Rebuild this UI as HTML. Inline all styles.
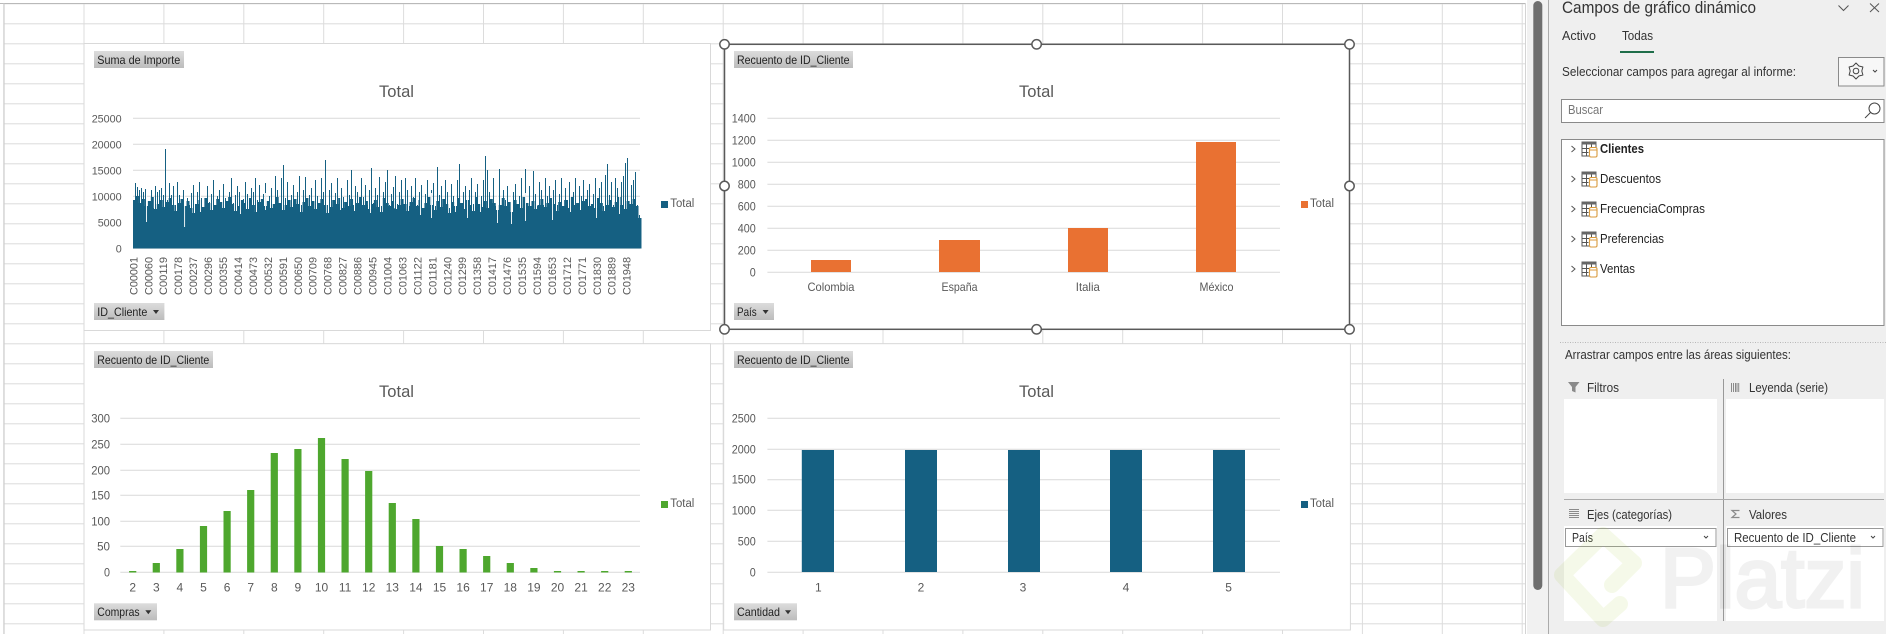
<!DOCTYPE html>
<html lang="es">
<head>
<meta charset="utf-8">
<title>Gráficos dinámicos</title>
<style>
html,body{margin:0;padding:0;width:1886px;height:634px;overflow:hidden;background:#fff}
svg{display:block}
text{font-family:"Liberation Sans",sans-serif}
.ax{font-size:12px;fill:#595959}
#c1 .ax{font-size:10.8px}
.ti{font-size:17px;fill:#595959}
.pv{font-size:12px;fill:#222}
.le{font-size:11.5px;fill:#595959}
.pn{font-size:12.5px;fill:#333}
.li{font-size:12.5px;fill:#222}
</style>
</head>
<body>
<svg width="1886" height="634" viewBox="0 0 1886 634" xmlns="http://www.w3.org/2000/svg">
<defs>
<pattern id="grid" patternUnits="userSpaceOnUse" x="83.5" y="3.3" width="79.9" height="20">
<rect x="0" y="0" width="1" height="20" fill="#dcdcdc"/>
<rect x="0" y="0" width="79.9" height="1" fill="#dcdcdc"/>
</pattern>
<pattern id="stripes" patternUnits="userSpaceOnUse" x="133" y="0" width="2" height="10">
<rect x="0" y="0" width="1" height="10" fill="#156082"/>
</pattern>
<linearGradient id="btn" x1="0" y1="0" x2="0" y2="1">
<stop offset="0" stop-color="#dcdcdc"/><stop offset="1" stop-color="#bcbcbc"/>
</linearGradient>
<g id="tbl">
<rect x="0.5" y="0.5" width="14" height="14" fill="#fff" stroke="#555" stroke-width="1"/>
<rect x="0" y="0" width="15" height="3" fill="#666"/>
<path d="M0 7H9M0 11H7M5 3V15M10 3V6" stroke="#555" stroke-width="1" fill="none"/>
<rect x="8" y="6" width="7.5" height="9.5" rx="1.5" fill="#fff" stroke="#d99a3c" stroke-width="1.1"/>
<path d="M8 8.5H15.5" stroke="#d99a3c" stroke-width="1"/>
</g>
</defs>

<!-- sheet -->
<rect width="1886" height="634" fill="#fff"/>
<rect x="4" y="3" width="1522" height="631" fill="url(#grid)"/>
<rect x="0" y="3" width="1526" height="1" fill="#b9b9b9"/>
<rect x="3.4" y="3" width="1" height="631" fill="#c6c6c6"/>
<rect x="1525" y="3" width="1" height="631" fill="#d4d4d4"/>

<!-- scrollbar -->
<rect x="1527" y="0" width="21" height="634" fill="#f1f1f1"/>
<rect x="1533.3" y="1" width="9" height="589" rx="4.5" fill="#6e6e6e"/>
<rect x="1548" y="0" width="1" height="634" fill="#ababab"/>

<!-- chart 1 -->
<g id="c1">
<rect x="84" y="43.5" width="626.5" height="287" fill="#fff" stroke="#d9d9d9"/>
<rect x="94" y="51" width="90" height="17" fill="url(#btn)"/>
<text class="pv" x="97.3" y="64" textLength="83" lengthAdjust="spacingAndGlyphs">Suma de Importe</text>
<text class="ti" x="379" y="97" textLength="35" lengthAdjust="spacingAndGlyphs">Total</text>
<g stroke="#d9d9d9" stroke-width="1">
<path d="M133 118.3H640M133 144.3H640M133 170.3H640M133 196.3H640M133 222.3H640M133 248.3H640"/>
</g>
<g text-anchor="end">
<text class="ax" x="121.7" y="122.3" textLength="30" lengthAdjust="spacingAndGlyphs">25000</text>
<text class="ax" x="121.7" y="148.3" textLength="30" lengthAdjust="spacingAndGlyphs">20000</text>
<text class="ax" x="121.7" y="174.3" textLength="30" lengthAdjust="spacingAndGlyphs">15000</text>
<text class="ax" x="121.7" y="200.3" textLength="30" lengthAdjust="spacingAndGlyphs">10000</text>
<text class="ax" x="121.7" y="226.3" textLength="24" lengthAdjust="spacingAndGlyphs">5000</text>
<text class="ax" x="121.7" y="252.3" textLength="6" lengthAdjust="spacingAndGlyphs">0</text>
</g>
<path fill="url(#stripes)" d="M133 248.5V209h2V183h2V187h2V190h2V188h2V192h2V189h2V222h2V205h2V190h2V208h2V186h2V192h2V190h2V188h2V195h2V149h2V200h2V183h2V195h2V186h2V205h2V182h2V195h2V208h2V190h2V227h2V198h2V205h2V193h2V185h2V204h2V192h2V182h2V198h2V207h2V200h2V186h2V202h2V194h2V180h2V205h2V196h2V190h2V208h2V184h2V198h2V205h2V192h2V178h2V203h2V195h2V186h2V192h2V206h2V199h2V182h2V194h2V205h2V188h2V192h2V178h2V200h2V185h2V207h2V194h2V183h2V205h2V196h2V188h2V204h2V176h2V190h2V205h2V178h2V165h2V198h2V182h2V206h2V195h2V185h2V204h2V192h2V176h2V205h2V190h2V177h2V206h2V195h2V188h2V203h2V180h2V196h2V206h2V178h2V192h2V160h2V205h2V190h2V183h2V204h2V193h2V178h2V205h2V188h2V197h2V206h2V180h2V195h2V170h2V205h2V186h2V192h2V206h2V178h2V197h2V185h2V205h2V190h2V168h2V203h2V188h2V195h2V177h2V206h2V192h2V182h2V170h2V205h2V194h2V187h2V176h2V204h2V192h2V180h2V205h2V178h2V190h2V206h2V186h2V197h2V178h2V205h2V192h2V185h2V208h2V194h2V180h2V205h2V190h2V183h2V206h2V167h2V195h2V186h2V205h2V180h2V192h2V208h2V184h2V196h2V206h2V180h2V164h2V205h2V192h2V186h2V208h2V190h2V178h2V204h2V192h2V184h2V205h2V196h2V180h2V156h2V170h2V192h2V204h2V178h2V206h2V223h2V169h2V208h2V190h2V200h2V186h2V210h2V223h2V192h2V184h2V205h2V196h2V178h2V221h2V169h2V204h2V186h2V208h2V171h2V194h2V206h2V182h2V190h2V205h2V178h2V196h2V186h2V220h2V190h2V180h2V205h2V194h2V178h2V207h2V188h2V200h2V182h2V205h2V192h2V178h2V206h2V186h2V196h2V180h2V205h2V190h2V184h2V208h2V194h2V178h2V203h2V188h2V182h2V206h2V175h2V164h2V195h2V182h2V205h2V178h2V188h2V207h2V182h2V176h2V163h2V158h2V204h2V185h2V180h2V172h2V205h2V215h2V248.5Z"/>
<path fill="#156082" transform="translate(133 0) scale(.9912 1)" d="M0 248.5V200h3V196h3V203h3V199h3V206h3V201h3V197h3V209h3V204h3V200h3V207h3V202h3V198h3V205h3V211h3V203h3V199h3V206h3V201h3V208h3V213h3V204h3V200h3V207h3V198h3V203h3V210h3V205h3V199h3V202h3V208h3V201h3V197h3V204h3V211h3V206h3V200h3V203h3V209h3V198h3V205h3V212h3V202h3V199h3V206h3V201h3V208h3V204h3V197h3V203h3V210h3V205h3V200h3V207h3V199h3V204h3V212h3V202h3V198h3V206h3V201h3V209h3V203h3V199h3V205h3V213h3V207h3V200h3V204h3V198h3V208h3V202h3V206h3V199h3V211h3V203h3V197h3V205h3V201h3V209h3V204h3V200h3V207h3V212h3V198h3V203h3V206h3V201h3V209h3V205h3V199h3V204h3V211h3V202h3V198h3V206h3V200h3V208h3V203h3V197h3V205h3V210h3V201h3V207h3V199h3V204h3V213h3V202h3V206h3V198h3V203h3V209h3V200h3V205h3V211h3V197h3V204h3V207h3V201h3V208h3V199h3V203h3V210h3V205h3V198h3V206h3V202h3V212h3V200h3V204h3V208h3V197h3V203h3V206h3V201h3V209h3V205h3V199h3V207h3V203h3V198h3V204h3V211h3V202h3V206h3V200h3V208h3V197h3V205h3V203h3V210h3V201h3V199h3V206h3V204h3V208h3V198h3V203h3V211h3V205h3V200h3V207h3V202h3V197h3V205h3V209h3V201h3V204h3V199h3V206h3V218h3V248.5Z"/>
<path stroke="#fff" stroke-width=".9" fill="none" d="M146.5 193V222M184.6 193V227M200.5 193V212M240.5 193V214M265.5 193V210M300.5 193V212M340.5 193V210M370.5 193V213M394.5 193V208M420.5 193V215M431.5 193V218M455.5 193V212M467.5 193V218M480.5 193V212M497.5 193V223M511.5 193V224M525.5 193V221M552.5 193V220M570.5 193V212M596.5 193V218M619.5 193V214"/>
<text class="ax" transform="translate(137.3 295) rotate(-90)" textLength="38" lengthAdjust="spacingAndGlyphs">C00001</text>
<text class="ax" transform="translate(152.25 295) rotate(-90)" textLength="38" lengthAdjust="spacingAndGlyphs">C00060</text>
<text class="ax" transform="translate(167.2 295) rotate(-90)" textLength="38" lengthAdjust="spacingAndGlyphs">C00119</text>
<text class="ax" transform="translate(182.15 295) rotate(-90)" textLength="38" lengthAdjust="spacingAndGlyphs">C00178</text>
<text class="ax" transform="translate(197.1 295) rotate(-90)" textLength="38" lengthAdjust="spacingAndGlyphs">C00237</text>
<text class="ax" transform="translate(212.05 295) rotate(-90)" textLength="38" lengthAdjust="spacingAndGlyphs">C00296</text>
<text class="ax" transform="translate(227 295) rotate(-90)" textLength="38" lengthAdjust="spacingAndGlyphs">C00355</text>
<text class="ax" transform="translate(241.95 295) rotate(-90)" textLength="38" lengthAdjust="spacingAndGlyphs">C00414</text>
<text class="ax" transform="translate(256.9 295) rotate(-90)" textLength="38" lengthAdjust="spacingAndGlyphs">C00473</text>
<text class="ax" transform="translate(271.85 295) rotate(-90)" textLength="38" lengthAdjust="spacingAndGlyphs">C00532</text>
<text class="ax" transform="translate(286.8 295) rotate(-90)" textLength="38" lengthAdjust="spacingAndGlyphs">C00591</text>
<text class="ax" transform="translate(301.75 295) rotate(-90)" textLength="38" lengthAdjust="spacingAndGlyphs">C00650</text>
<text class="ax" transform="translate(316.7 295) rotate(-90)" textLength="38" lengthAdjust="spacingAndGlyphs">C00709</text>
<text class="ax" transform="translate(331.65 295) rotate(-90)" textLength="38" lengthAdjust="spacingAndGlyphs">C00768</text>
<text class="ax" transform="translate(346.6 295) rotate(-90)" textLength="38" lengthAdjust="spacingAndGlyphs">C00827</text>
<text class="ax" transform="translate(361.55 295) rotate(-90)" textLength="38" lengthAdjust="spacingAndGlyphs">C00886</text>
<text class="ax" transform="translate(376.5 295) rotate(-90)" textLength="38" lengthAdjust="spacingAndGlyphs">C00945</text>
<text class="ax" transform="translate(391.45 295) rotate(-90)" textLength="38" lengthAdjust="spacingAndGlyphs">C01004</text>
<text class="ax" transform="translate(406.4 295) rotate(-90)" textLength="38" lengthAdjust="spacingAndGlyphs">C01063</text>
<text class="ax" transform="translate(421.35 295) rotate(-90)" textLength="38" lengthAdjust="spacingAndGlyphs">C01122</text>
<text class="ax" transform="translate(436.3 295) rotate(-90)" textLength="38" lengthAdjust="spacingAndGlyphs">C01181</text>
<text class="ax" transform="translate(451.25 295) rotate(-90)" textLength="38" lengthAdjust="spacingAndGlyphs">C01240</text>
<text class="ax" transform="translate(466.2 295) rotate(-90)" textLength="38" lengthAdjust="spacingAndGlyphs">C01299</text>
<text class="ax" transform="translate(481.15 295) rotate(-90)" textLength="38" lengthAdjust="spacingAndGlyphs">C01358</text>
<text class="ax" transform="translate(496.1 295) rotate(-90)" textLength="38" lengthAdjust="spacingAndGlyphs">C01417</text>
<text class="ax" transform="translate(511.05 295) rotate(-90)" textLength="38" lengthAdjust="spacingAndGlyphs">C01476</text>
<text class="ax" transform="translate(526 295) rotate(-90)" textLength="38" lengthAdjust="spacingAndGlyphs">C01535</text>
<text class="ax" transform="translate(540.95 295) rotate(-90)" textLength="38" lengthAdjust="spacingAndGlyphs">C01594</text>
<text class="ax" transform="translate(555.9 295) rotate(-90)" textLength="38" lengthAdjust="spacingAndGlyphs">C01653</text>
<text class="ax" transform="translate(570.85 295) rotate(-90)" textLength="38" lengthAdjust="spacingAndGlyphs">C01712</text>
<text class="ax" transform="translate(585.8 295) rotate(-90)" textLength="38" lengthAdjust="spacingAndGlyphs">C01771</text>
<text class="ax" transform="translate(600.75 295) rotate(-90)" textLength="38" lengthAdjust="spacingAndGlyphs">C01830</text>
<text class="ax" transform="translate(615.7 295) rotate(-90)" textLength="38" lengthAdjust="spacingAndGlyphs">C01889</text>
<text class="ax" transform="translate(630.65 295) rotate(-90)" textLength="38" lengthAdjust="spacingAndGlyphs">C01948</text>
<rect x="661" y="201" width="7" height="7" fill="#156082"/>
<text class="le" x="670.3" y="207" textLength="24" lengthAdjust="spacingAndGlyphs">Total</text>
<rect x="94" y="303" width="70.4" height="17" fill="url(#btn)"/>
<text class="pv" x="97.3" y="316" textLength="50" lengthAdjust="spacingAndGlyphs">ID_Cliente</text>
<path d="M153 310H159L156 314Z" fill="#333"/>
</g>

<!-- chart 2 -->
<rect x="724.5" y="44.3" width="625" height="285" fill="#fff"/>
<rect x="734" y="51" width="119" height="17" fill="url(#btn)"/>
<text class="pv" x="737" y="64" textLength="112.5" lengthAdjust="spacingAndGlyphs">Recuento de ID_Cliente</text>
<text class="ti" x="1019" y="97" textLength="35" lengthAdjust="spacingAndGlyphs">Total</text>
<path stroke="#d9d9d9" d="M767.4 118.3H1280M767.4 140.3H1280M767.4 162.3H1280M767.4 184.3H1280M767.4 206.3H1280M767.4 228.3H1280M767.4 250.3H1280M767.4 272.3H1280"/>
<g text-anchor="end">
<text class="ax" x="755.8" y="122.3" textLength="24" lengthAdjust="spacingAndGlyphs">1400</text>
<text class="ax" x="755.8" y="144.3" textLength="24" lengthAdjust="spacingAndGlyphs">1200</text>
<text class="ax" x="755.8" y="166.3" textLength="24" lengthAdjust="spacingAndGlyphs">1000</text>
<text class="ax" x="755.8" y="188.3" textLength="18" lengthAdjust="spacingAndGlyphs">800</text>
<text class="ax" x="755.8" y="210.3" textLength="18" lengthAdjust="spacingAndGlyphs">600</text>
<text class="ax" x="755.8" y="232.3" textLength="18" lengthAdjust="spacingAndGlyphs">400</text>
<text class="ax" x="755.8" y="254.3" textLength="18" lengthAdjust="spacingAndGlyphs">200</text>
<text class="ax" x="755.8" y="276.3" textLength="6" lengthAdjust="spacingAndGlyphs">0</text>
</g>
<g fill="#e97132">
<rect x="811" y="260" width="40" height="12"/>
<rect x="939" y="240" width="41" height="32"/>
<rect x="1068" y="228" width="40" height="44"/>
<rect x="1196" y="142" width="40" height="130"/>
</g>
<text class="ax" x="807.5" y="291" textLength="47" lengthAdjust="spacingAndGlyphs">Colombia</text>
<text class="ax" x="941.5" y="291" textLength="36" lengthAdjust="spacingAndGlyphs">España</text>
<text class="ax" x="1075.8" y="291" textLength="24" lengthAdjust="spacingAndGlyphs">Italia</text>
<text class="ax" x="1199.5" y="291" textLength="34" lengthAdjust="spacingAndGlyphs">México</text>
<rect x="1301" y="201" width="7" height="7" fill="#e97132"/>
<text class="le" x="1310" y="207" textLength="24" lengthAdjust="spacingAndGlyphs">Total</text>
<rect x="734" y="303" width="40" height="17" fill="url(#btn)"/>
<text class="pv" x="737" y="316" textLength="19.7" lengthAdjust="spacingAndGlyphs">País</text>
<path d="M762.6 310H768.6L765.6 314Z" fill="#333"/>

<!-- chart 3 -->
<rect x="84" y="343.7" width="626.5" height="286.3" fill="#fff" stroke="#d9d9d9"/>
<rect x="94" y="351" width="119" height="17" fill="url(#btn)"/>
<text class="pv" x="97.3" y="364" textLength="112" lengthAdjust="spacingAndGlyphs">Recuento de ID_Cliente</text>
<text class="ti" x="379" y="397" textLength="35" lengthAdjust="spacingAndGlyphs">Total</text>
<path stroke="#d9d9d9" d="M120.3 418.3H640M120.3 444.3H640M120.3 470.3H640M120.3 495.3H640M120.3 521.3H640M120.3 546.3H640M120.3 572.3H640"/>
<g text-anchor="end">
<text class="ax" x="110" y="422.3" textLength="18.8" lengthAdjust="spacingAndGlyphs">300</text>
<text class="ax" x="110" y="448.3" textLength="18.8" lengthAdjust="spacingAndGlyphs">250</text>
<text class="ax" x="110" y="474.3" textLength="18.8" lengthAdjust="spacingAndGlyphs">200</text>
<text class="ax" x="110" y="499.3" textLength="18.8" lengthAdjust="spacingAndGlyphs">150</text>
<text class="ax" x="110" y="525.3" textLength="18.8" lengthAdjust="spacingAndGlyphs">100</text>
<text class="ax" x="110" y="550.3" textLength="12.9" lengthAdjust="spacingAndGlyphs">50</text>
<text class="ax" x="110" y="576.3" textLength="6" lengthAdjust="spacingAndGlyphs">0</text>
</g>
<g fill="#4ea72e">
<rect x="129.1" y="571" width="7.2" height="1.5"/>
<rect x="152.7" y="563" width="7.2" height="9.5"/>
<rect x="176.3" y="549" width="7.2" height="23.5"/>
<rect x="199.9" y="526" width="7.2" height="46.5"/>
<rect x="223.5" y="511" width="7.2" height="61.5"/>
<rect x="247.1" y="490" width="7.2" height="82.5"/>
<rect x="270.7" y="453" width="7.2" height="119.5"/>
<rect x="294.3" y="449" width="7.2" height="123.5"/>
<rect x="317.9" y="438" width="7.2" height="134.5"/>
<rect x="341.5" y="459" width="7.2" height="113.5"/>
<rect x="365.1" y="471" width="7.2" height="101.5"/>
<rect x="388.7" y="503" width="7.2" height="69.5"/>
<rect x="412.3" y="519" width="7.2" height="53.5"/>
<rect x="435.9" y="546" width="7.2" height="26.5"/>
<rect x="459.5" y="549" width="7.2" height="23.5"/>
<rect x="483.1" y="556" width="7.2" height="16.5"/>
<rect x="506.7" y="563" width="7.2" height="9.5"/>
<rect x="530.3" y="568" width="7.2" height="4.5"/>
<rect x="553.9" y="571" width="7.2" height="1.5"/>
<rect x="577.5" y="571" width="7.2" height="1.5"/>
<rect x="601.1" y="571" width="7.2" height="1.5"/>
<rect x="624.7" y="571" width="7.2" height="1.5"/>
</g>
<g text-anchor="middle">
<text class="ax" x="132.7" y="591.3">2</text><text class="ax" x="156.3" y="591.3">3</text><text class="ax" x="179.9" y="591.3">4</text><text class="ax" x="203.5" y="591.3">5</text><text class="ax" x="227.1" y="591.3">6</text><text class="ax" x="250.7" y="591.3">7</text><text class="ax" x="274.3" y="591.3">8</text><text class="ax" x="297.9" y="591.3">9</text><text class="ax" x="321.5" y="591.3">10</text><text class="ax" x="345.1" y="591.3">11</text><text class="ax" x="368.7" y="591.3">12</text><text class="ax" x="392.3" y="591.3">13</text><text class="ax" x="415.9" y="591.3">14</text><text class="ax" x="439.5" y="591.3">15</text><text class="ax" x="463.1" y="591.3">16</text><text class="ax" x="486.7" y="591.3">17</text><text class="ax" x="510.3" y="591.3">18</text><text class="ax" x="533.9" y="591.3">19</text><text class="ax" x="557.5" y="591.3">20</text><text class="ax" x="581.1" y="591.3">21</text><text class="ax" x="604.7" y="591.3">22</text><text class="ax" x="628.3" y="591.3">23</text>
</g>
<rect x="661" y="501" width="7" height="7" fill="#4ea72e"/>
<text class="le" x="670.3" y="507" textLength="24" lengthAdjust="spacingAndGlyphs">Total</text>
<rect x="94" y="603.3" width="63" height="17" fill="url(#btn)"/>
<text class="pv" x="97.3" y="616" textLength="42.3" lengthAdjust="spacingAndGlyphs">Compras</text>
<path d="M145.3 610.3H151.3L148.3 614.3Z" fill="#333"/>

<!-- chart 4 -->
<rect x="723.7" y="343.7" width="626.7" height="286.3" fill="#fff" stroke="#d9d9d9"/>
<rect x="734" y="351" width="119" height="17" fill="url(#btn)"/>
<text class="pv" x="737" y="364" textLength="112.5" lengthAdjust="spacingAndGlyphs">Recuento de ID_Cliente</text>
<text class="ti" x="1019" y="397" textLength="35" lengthAdjust="spacingAndGlyphs">Total</text>
<path stroke="#d9d9d9" d="M767.4 418.3H1280M767.4 449.3H1280M767.4 479.7H1280M767.4 510.3H1280M767.4 541.3H1280M767.4 572.3H1280"/>
<g text-anchor="end">
<text class="ax" x="755.8" y="422.3" textLength="24" lengthAdjust="spacingAndGlyphs">2500</text>
<text class="ax" x="755.8" y="453.3" textLength="24" lengthAdjust="spacingAndGlyphs">2000</text>
<text class="ax" x="755.8" y="483.7" textLength="24" lengthAdjust="spacingAndGlyphs">1500</text>
<text class="ax" x="755.8" y="514.3" textLength="24" lengthAdjust="spacingAndGlyphs">1000</text>
<text class="ax" x="755.8" y="545.3" textLength="18" lengthAdjust="spacingAndGlyphs">500</text>
<text class="ax" x="755.8" y="576.3" textLength="6" lengthAdjust="spacingAndGlyphs">0</text>
</g>
<g fill="#156082">
<rect x="801.8" y="450" width="32.2" height="122"/>
<rect x="905" y="450" width="32" height="122"/>
<rect x="1008" y="450" width="32" height="122"/>
<rect x="1110" y="450" width="32" height="122"/>
<rect x="1213" y="450" width="32" height="122"/>
</g>
<g text-anchor="middle">
<text class="ax" x="818.3" y="591.3">1</text>
<text class="ax" x="921" y="591.3">2</text>
<text class="ax" x="1023" y="591.3">3</text>
<text class="ax" x="1126" y="591.3">4</text>
<text class="ax" x="1228.6" y="591.3">5</text>
</g>
<rect x="1301" y="501" width="7" height="7" fill="#156082"/>
<text class="le" x="1310" y="507" textLength="24" lengthAdjust="spacingAndGlyphs">Total</text>
<rect x="734" y="603.3" width="63" height="17" fill="url(#btn)"/>
<text class="pv" x="737" y="616" textLength="43" lengthAdjust="spacingAndGlyphs">Cantidad</text>
<path d="M785 610.3H791L788 614.3Z" fill="#333"/>

<!-- selection on chart 2 -->
<rect x="724.5" y="44.3" width="625" height="285" fill="none" stroke="#595959" stroke-width="1.5"/>
<g fill="#fff" stroke="#595959" stroke-width="1.5">
<circle cx="724.5" cy="44.3" r="4.7"/><circle cx="1036.6" cy="44.3" r="4.7"/><circle cx="1349.5" cy="44.3" r="4.7"/>
<circle cx="724.5" cy="186" r="4.7"/><circle cx="1349.5" cy="186" r="4.7"/>
<circle cx="724.5" cy="329.3" r="4.7"/><circle cx="1036.6" cy="329.3" r="4.7"/><circle cx="1349.5" cy="329.3" r="4.7"/>
</g>

<!-- panel -->
<rect x="1549" y="0" width="337" height="634" fill="#efefef"/>
<text x="1562" y="13" font-size="16.5" fill="#333" textLength="194" lengthAdjust="spacingAndGlyphs">Campos de gráfico dinámico</text>
<path d="M1838.5 5.5L1843.5 10.5L1848.5 5.5" fill="none" stroke="#555"/>
<path d="M1870 3.5L1879 12M1879 3.5L1870 12" fill="none" stroke="#555"/>
<text class="pn" x="1562" y="40" textLength="34" lengthAdjust="spacingAndGlyphs">Activo</text>
<text class="pn" x="1622" y="40" textLength="31" lengthAdjust="spacingAndGlyphs">Todas</text>
<rect x="1620" y="51" width="34" height="2" fill="#1f6e4a"/>
<text class="pn" x="1562" y="76" textLength="234" lengthAdjust="spacingAndGlyphs">Seleccionar campos para agregar al informe:</text>
<rect x="1838.5" y="57.5" width="45.5" height="28.5" fill="#f7f7f7" stroke="#8a8a8a"/>
<g transform="translate(1856 71)" fill="none" stroke="#444" stroke-linejoin="round">
<path d="M0 -8L2.9 -5L6.9 -4L5.8 0L6.9 4L2.9 5L0 8L-2.9 5L-6.9 4L-5.8 0L-6.9 -4L-2.9 -5Z"/>
<circle r="2.8"/>
</g>
<path d="M1873 70L1875 72L1877 70" fill="none" stroke="#444"/>
<rect x="1561.5" y="99.5" width="322.5" height="23" fill="#fff" stroke="#8a8a8a"/>
<text x="1568" y="114" font-size="12.5" fill="#777" textLength="35" lengthAdjust="spacingAndGlyphs">Buscar</text>
<circle cx="1874.5" cy="108.5" r="5.5" fill="none" stroke="#444"/>
<path d="M1870.5 112.5L1865 118" fill="none" stroke="#444"/>
<rect x="1561.5" y="139.5" width="322.5" height="186" fill="#fff" stroke="#8a8a8a"/>
<g fill="none" stroke="#555">
<path d="M1571.5 146L1575 149L1571.5 152"/>
<path d="M1571.5 176L1575 179L1571.5 182"/>
<path d="M1571.5 206L1575 209L1571.5 212"/>
<path d="M1571.5 236L1575 239L1571.5 242"/>
<path d="M1571.5 266L1575 269L1571.5 272"/>
</g>
<use href="#tbl" x="1581.5" y="141.5"/>
<use href="#tbl" x="1581.5" y="171.5"/>
<use href="#tbl" x="1581.5" y="201.5"/>
<use href="#tbl" x="1581.5" y="231.5"/>
<use href="#tbl" x="1581.5" y="261.5"/>
<text class="li" x="1600" y="153" font-weight="bold" textLength="44" lengthAdjust="spacingAndGlyphs">Clientes</text>
<text class="li" x="1600" y="183" textLength="61" lengthAdjust="spacingAndGlyphs">Descuentos</text>
<text class="li" x="1600" y="213" textLength="105" lengthAdjust="spacingAndGlyphs">FrecuenciaCompras</text>
<text class="li" x="1600" y="243" textLength="64" lengthAdjust="spacingAndGlyphs">Preferencias</text>
<text class="li" x="1600" y="273" textLength="35" lengthAdjust="spacingAndGlyphs">Ventas</text>

<path d="M1560 342.5H1886" stroke="#b8b8b8" stroke-dasharray="1 1.5"/>
<text class="pn" x="1565" y="359" textLength="226" lengthAdjust="spacingAndGlyphs">Arrastrar campos entre las áreas siguientes:</text>

<rect x="1564" y="399" width="153" height="94" fill="#fff"/>
<rect x="1726" y="399" width="158" height="94" fill="#fff"/>
<rect x="1564" y="526" width="153" height="95" fill="#fff"/>
<rect x="1726" y="526" width="158" height="95" fill="#fff"/>
<path d="M1723.5 379V621" stroke="#999"/>
<path d="M1564 499.5H1884" stroke="#aaa"/>

<path d="M1568 382H1579.5L1575.5 387V392.5L1572 391V387Z" fill="#8a8a8a"/>
<text class="pn" x="1587" y="392" textLength="32" lengthAdjust="spacingAndGlyphs">Filtros</text>
<path d="M1731.5 383V392M1733.5 383V392M1735.5 383V392M1737 383V392M1738.7 383V392" stroke="#8a8a8a" stroke-width="1"/>
<text class="pn" x="1749" y="392" textLength="79" lengthAdjust="spacingAndGlyphs">Leyenda (serie)</text>
<path d="M1569 509.5H1579M1569 511.5H1579M1569 513.5H1579M1569 515.5H1579M1569 517.5H1579" stroke="#8a8a8a" stroke-width="1"/>
<text class="pn" x="1587" y="519" textLength="85" lengthAdjust="spacingAndGlyphs">Ejes (categorías)</text>
<path d="M1739.5 510.5H1732L1736 514L1732 517.5H1739.5" fill="none" stroke="#8a8a8a" stroke-width="1.2"/>
<text class="pn" x="1749" y="519" textLength="38" lengthAdjust="spacingAndGlyphs">Valores</text>

<rect x="1565.5" y="528.5" width="150.5" height="18" fill="#fff" stroke="#999"/>
<text class="pn" x="1572" y="542" textLength="21" lengthAdjust="spacingAndGlyphs">País</text>
<path d="M1704 536L1706 538L1708 536" fill="none" stroke="#444"/>
<rect x="1727.5" y="528.5" width="155.5" height="18" fill="#fff" stroke="#999"/>
<text class="pn" x="1734" y="542" textLength="122" lengthAdjust="spacingAndGlyphs">Recuento de ID_Cliente</text>
<path d="M1871 536L1873 538L1875 536" fill="none" stroke="#444"/>

<!-- watermark -->
<path d="M1620 604L1603 619L1562 575L1603 535L1634 563L1612 585" fill="none" stroke="#a5c93a" stroke-width="16" stroke-linejoin="round" stroke-linecap="round" opacity=".11"/>
<text x="1660" y="607" font-size="84" fill="#000" stroke="#000" stroke-width="3" opacity=".05" textLength="205" lengthAdjust="spacingAndGlyphs">Platzi</text>
</svg>
</body>
</html>
